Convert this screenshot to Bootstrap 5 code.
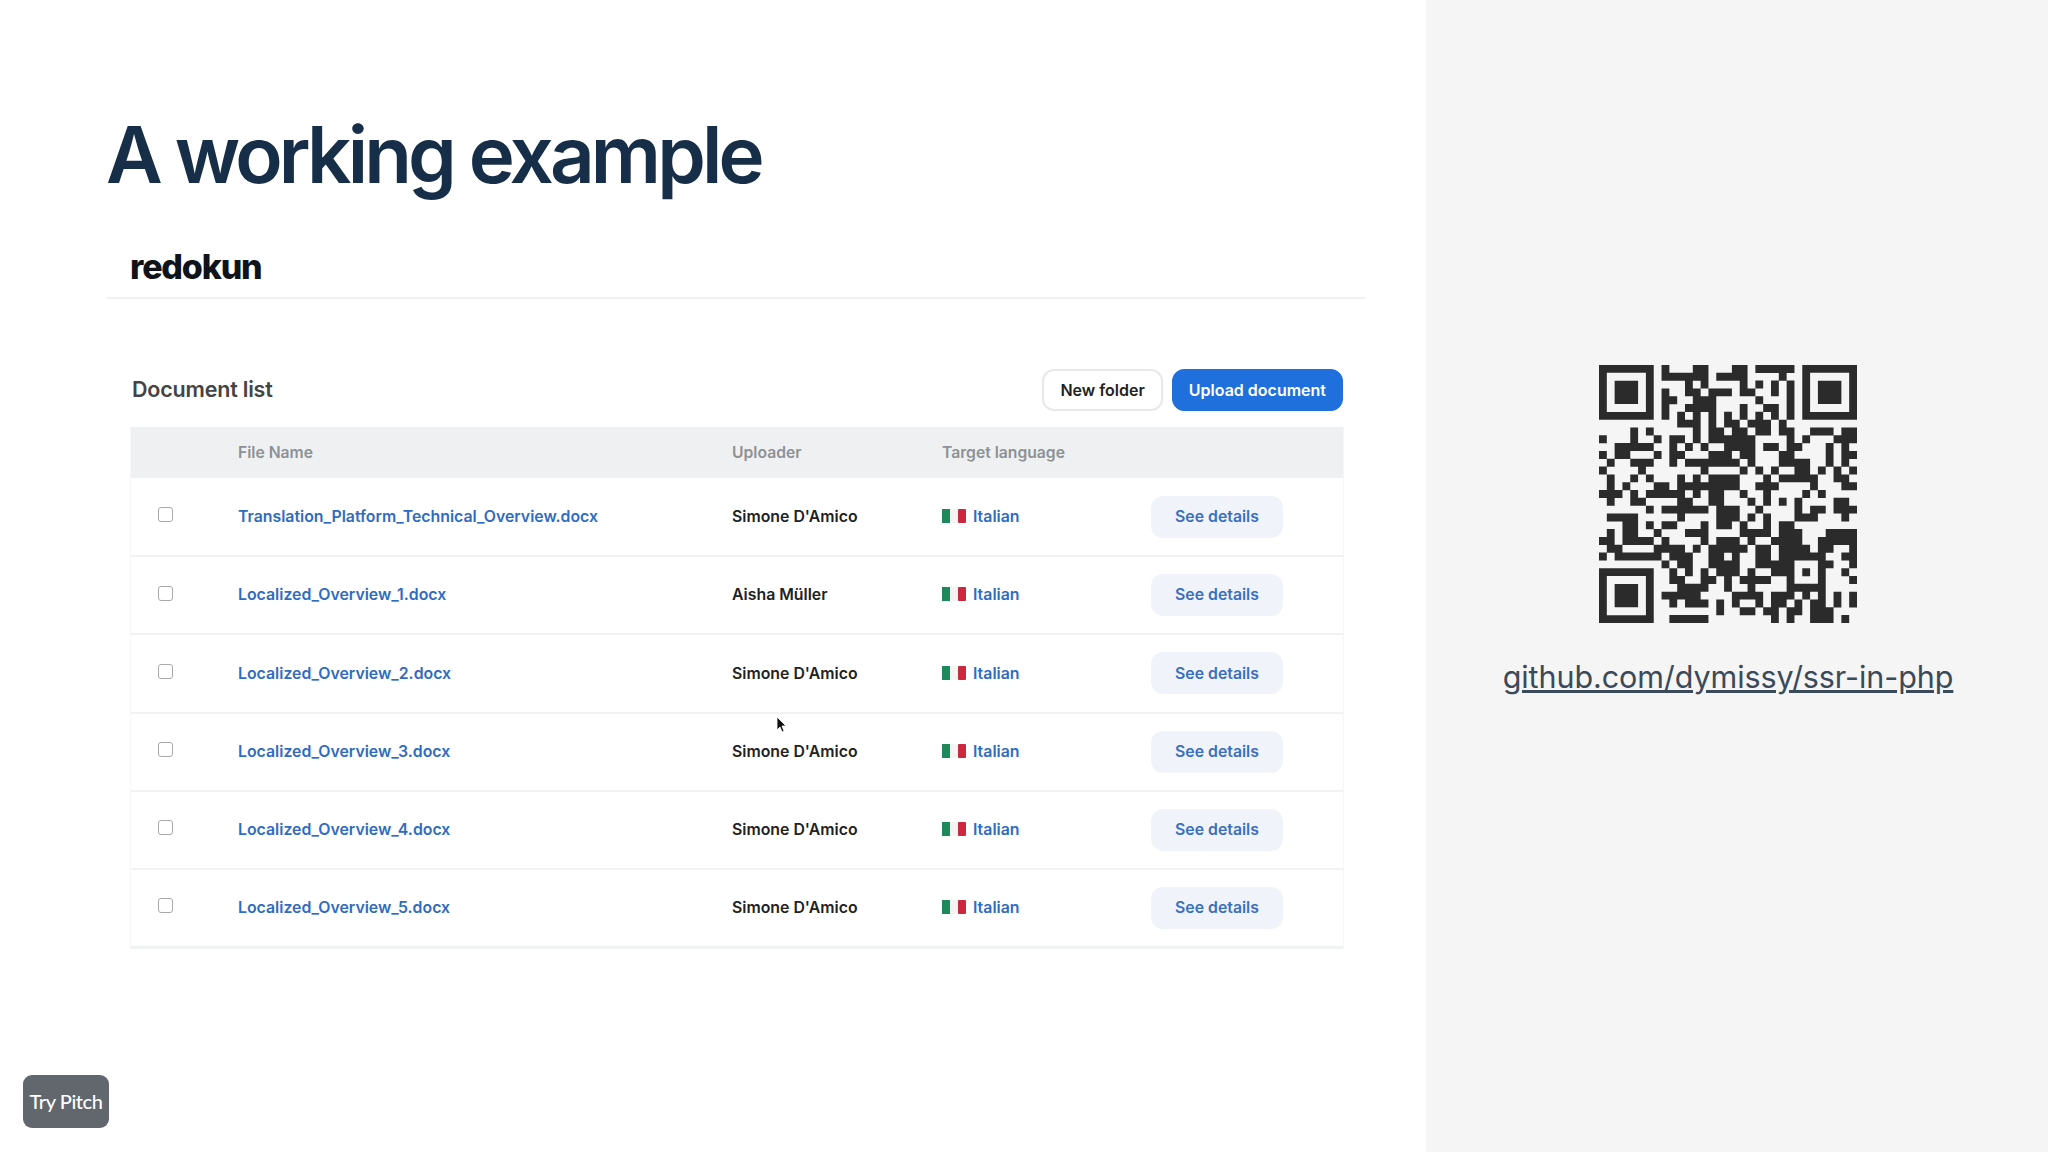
<!DOCTYPE html>
<html lang="en">
<head>
<meta charset="utf-8">
<title>A working example</title>
<link href="https://cdn.jsdelivr.net/npm/bootstrap@5.3.0/dist/css/bootstrap.min.css" rel="stylesheet">
<style>
html,body{height:100%;}
body{font-family:"Inter","Liberation Sans",sans-serif;background:#fff;overflow:hidden;}
.slide{height:1152px;position:relative;}
.slide-main{width:1426px;padding:112px 61px 0 107px;}
.slide-side{width:622px;background:#f5f5f5;padding:365px 18px 0 0;}
.slide-title{font-size:78px;line-height:86px;font-weight:600;letter-spacing:-3.85px;color:#172e48;margin:0 0 41px -1px;}
.app-head{padding:0 0 4px 23px;height:60px;border-bottom:2px solid #eef0f1;display:flex;align-items:center;}
.app-logo{font-size:34px;font-weight:800;letter-spacing:-1.2px;color:#10131a;}
.app-body{padding:70px 22px 0 24px;}
.doc-title{font-size:21.5px;font-weight:600;letter-spacing:-.2px;color:#444;margin:0;padding-left:1px;}
.doc-bar{height:42px;margin-bottom:16px;}
.act-row{column-gap:9px;}
.act{font-size:16px;font-weight:600;height:42px;border-radius:12px;padding:0 16px;display:inline-flex;align-items:center;}
.act-light{background:#fff;border:2px solid #e8e8e8;color:#222;}
.act-blue{background:#1f6fdc;border:1px solid #1f6fdc;color:#fff;}
.doc-table{width:1212px;table-layout:fixed;margin:0;box-shadow:1px 0 0 #f6f6f6,-1px 0 0 #f6f6f6;}
.doc-table th{background:#eff0f2;color:#8d9095;font-size:15.7px;font-weight:600;height:51px;padding:0;vertical-align:middle;border:0;}
.doc-table td{height:78.2px;padding:0;vertical-align:middle;font-size:15.85px;font-weight:600;color:#222;border-bottom:2px solid #f1f2f3;}
.doc-table tr:last-child td{border-bottom-width:3px;}
.cell-box{padding-left:27px!important;}
.cell-box .form-check-input{width:15px;height:15px;margin:0 0 4px;border:1.5px solid #a8a8a8;border-radius:3px;display:block;}
.doc-link{color:#2f6cc0;text-decoration:none;}
.lang-flag{width:24px;height:14px;margin-right:7px;vertical-align:-1px;}
.see{background:#f0f4fa;color:#3a6fc0;font-size:15.8px;font-weight:600;border:0;border-radius:12px;width:132px;height:42px;padding:0;}
.qr-code{width:258px;height:258px;display:block;}
.repo-link{font-size:30.5px;color:#3a4a5a;letter-spacing:-.08px;line-height:1;margin-top:39px;}
.try-pitch{position:absolute;left:23px;top:1075px;width:86px;height:53px;border-radius:9px;background:#62666d;color:#fff;font:500 20px/53px "Lato","Liberation Sans",sans-serif;letter-spacing:-.45px;text-align:center;}
.mouse-arrow{position:absolute;left:776px;top:716px;width:11px;height:18px;}
</style>
</head>
<body>
<div class="slide d-flex">
  <main class="slide-main">
    <h1 class="slide-title">A working example</h1>
    <div class="app-head"><span class="app-logo">redokun</span></div>
    <div class="app-body">
      <div class="doc-bar d-flex align-items-center justify-content-between">
        <h2 class="doc-title">Document list</h2>
        <div class="d-flex act-row">
          <button type="button" class="btn act act-light">New folder</button>
          <button type="button" class="btn act act-blue">Upload document</button>
        </div>
      </div>
      <table class="table doc-table">
        <colgroup><col style="width:107px"><col style="width:494px"><col style="width:210px"><col style="width:209px"><col style="width:192px"></colgroup>
        <thead><tr><th></th><th>File Name</th><th>Uploader</th><th>Target language</th><th></th></tr></thead>
        <tbody>
          <tr><td class="cell-box"><input class="form-check-input" type="checkbox" aria-label="Select"></td><td><a class="doc-link" href="#">Translation_Platform_Technical_Overview.docx</a></td><td>Simone D'Amico</td><td><svg class="lang-flag" viewBox="0 0 24 14"><rect width="8" height="14" fill="#1e8a5c"/><rect x="8" width="8" height="14" fill="#f4f4f4"/><rect x="16" width="8" height="14" rx="1" fill="#c9283f"/></svg><a class="doc-link" href="#">Italian</a></td><td><button type="button" class="btn see">See details</button></td></tr>
          <tr><td class="cell-box"><input class="form-check-input" type="checkbox" aria-label="Select"></td><td><a class="doc-link" href="#">Localized_Overview_1.docx</a></td><td>Aisha Müller</td><td><svg class="lang-flag" viewBox="0 0 24 14"><rect width="8" height="14" fill="#1e8a5c"/><rect x="8" width="8" height="14" fill="#f4f4f4"/><rect x="16" width="8" height="14" rx="1" fill="#c9283f"/></svg><a class="doc-link" href="#">Italian</a></td><td><button type="button" class="btn see">See details</button></td></tr>
          <tr><td class="cell-box"><input class="form-check-input" type="checkbox" aria-label="Select"></td><td><a class="doc-link" href="#">Localized_Overview_2.docx</a></td><td>Simone D'Amico</td><td><svg class="lang-flag" viewBox="0 0 24 14"><rect width="8" height="14" fill="#1e8a5c"/><rect x="8" width="8" height="14" fill="#f4f4f4"/><rect x="16" width="8" height="14" rx="1" fill="#c9283f"/></svg><a class="doc-link" href="#">Italian</a></td><td><button type="button" class="btn see">See details</button></td></tr>
          <tr><td class="cell-box"><input class="form-check-input" type="checkbox" aria-label="Select"></td><td><a class="doc-link" href="#">Localized_Overview_3.docx</a></td><td>Simone D'Amico</td><td><svg class="lang-flag" viewBox="0 0 24 14"><rect width="8" height="14" fill="#1e8a5c"/><rect x="8" width="8" height="14" fill="#f4f4f4"/><rect x="16" width="8" height="14" rx="1" fill="#c9283f"/></svg><a class="doc-link" href="#">Italian</a></td><td><button type="button" class="btn see">See details</button></td></tr>
          <tr><td class="cell-box"><input class="form-check-input" type="checkbox" aria-label="Select"></td><td><a class="doc-link" href="#">Localized_Overview_4.docx</a></td><td>Simone D'Amico</td><td><svg class="lang-flag" viewBox="0 0 24 14"><rect width="8" height="14" fill="#1e8a5c"/><rect x="8" width="8" height="14" fill="#f4f4f4"/><rect x="16" width="8" height="14" rx="1" fill="#c9283f"/></svg><a class="doc-link" href="#">Italian</a></td><td><button type="button" class="btn see">See details</button></td></tr>
          <tr><td class="cell-box"><input class="form-check-input" type="checkbox" aria-label="Select"></td><td><a class="doc-link" href="#">Localized_Overview_5.docx</a></td><td>Simone D'Amico</td><td><svg class="lang-flag" viewBox="0 0 24 14"><rect width="8" height="14" fill="#1e8a5c"/><rect x="8" width="8" height="14" fill="#f4f4f4"/><rect x="16" width="8" height="14" rx="1" fill="#c9283f"/></svg><a class="doc-link" href="#">Italian</a></td><td><button type="button" class="btn see">See details</button></td></tr>
        </tbody>
      </table>
    </div>
  </main>
  <aside class="slide-side d-flex flex-column align-items-center">
    <svg class="qr-code" viewBox="0 0 33 33" aria-label="QR code">
      <path fill="#2b2b2b" fill-rule="evenodd" d="M0 0h7v7H0zM1 1v5h5V1zM2 2h3v3H2zM26 0h7v7h-7zM27 1v5h5V1zM28 2h3v3h-3zM0 26h7v7H0zM1 27v5h5v-5zM2 28h3v3H2z"/>
      <path stroke="#2b2b2b" stroke-width="1.02" fill="none" d="M8 .5h1M12 .5h2M17 .5h2M20 .5h5
M8 1.5h6M15 1.5h4M23 1.5h1
M11 2.5h1M13 2.5h1M18 2.5h1M20 2.5h1M22 2.5h1M24 2.5h1
M8 3.5h1M11 3.5h2M14 3.5h3M18 3.5h2M22 3.5h1M24 3.5h1
M8 4.5h2M12 4.5h3M20 4.5h1M24 4.5h1
M8 5.5h1M11 5.5h4M18 5.5h1M21 5.5h2M24 5.5h1
M8 6.5h1M10 6.5h1M12 6.5h1M14 6.5h1M16 6.5h1M18 6.5h1M20 6.5h1M22 6.5h1M24 6.5h1
M10 7.5h3M14 7.5h1M16 7.5h2M19 7.5h3M23 7.5h1
M4 8.5h1M6 8.5h1M12 8.5h1M14 8.5h2M17 8.5h2M20 8.5h2M23 8.5h2M27 8.5h3M31 8.5h2
M0 9.5h1M4 9.5h1M7 9.5h1M9 9.5h2M12 9.5h1M14 9.5h6M24 9.5h1M26 9.5h1M30 9.5h3
M2 10.5h5M9 10.5h1M11 10.5h1M13 10.5h1M16 10.5h4M21 10.5h2M24 10.5h2M29 10.5h1M31 10.5h1
M0 11.5h1M2 11.5h2M7 11.5h1M9 11.5h2M14 11.5h3M18 11.5h2M23 11.5h2M29 11.5h1M31 11.5h2
M1 12.5h1M4 12.5h3M9 12.5h1M11 12.5h7M19 12.5h1M23 12.5h4M29 12.5h1M31 12.5h1
M0 13.5h1M5 13.5h1M13 13.5h1M18 13.5h1M20 13.5h1M22 13.5h1M25 13.5h2M28 13.5h1M30 13.5h1M32 13.5h1
M1 14.5h1M4 14.5h1M6 14.5h1M10 14.5h1M12 14.5h1M14 14.5h4M21 14.5h1M23 14.5h5M30 14.5h2
M1 15.5h1M3 15.5h1M7 15.5h2M10 15.5h8M20 15.5h3M27 15.5h1M31 15.5h2
M0 16.5h3M4 16.5h1M6 16.5h5M12 16.5h1M14 16.5h2M18 16.5h1M21 16.5h1M26 16.5h1M28 16.5h1
M1 17.5h1M4 17.5h2M10 17.5h2M14 17.5h2M19 17.5h1M21 17.5h1M23 17.5h1M25 17.5h1M30 17.5h2
M6 18.5h1M8 18.5h6M15 18.5h3M20 18.5h1M25 18.5h1M27 18.5h2M30 18.5h3
M1 19.5h4M10 19.5h1M15 19.5h3M19 19.5h1M21 19.5h1M25 19.5h3M31 19.5h1
M3 20.5h2M6 20.5h1M8 20.5h2M13 20.5h1M15 20.5h2M18 20.5h1M21 20.5h1M23 20.5h2
M1 21.5h1M3 21.5h2M7 21.5h1M11 21.5h3M18 21.5h4M23 21.5h3M29 21.5h4
M0 22.5h2M3 22.5h4M8 22.5h1M13 22.5h1M15 22.5h3M19 22.5h1M22 22.5h4M28 22.5h5
M1 23.5h2M7 23.5h4M12 23.5h1M14 23.5h5M20 23.5h2M23 23.5h4M28 23.5h2M32 23.5h1
M0 24.5h1M2 24.5h6M9 24.5h3M14 24.5h2M17 24.5h1M20 24.5h2M23 24.5h6M31 24.5h2
M8 25.5h1M10 25.5h2M14 25.5h4M20 25.5h5M28 25.5h2M32 25.5h1
M9 26.5h1M11 26.5h1M13 26.5h1M15 26.5h3M19 26.5h1M22 26.5h3M26 26.5h1M28 26.5h1M31 26.5h1
M9 27.5h2M13 27.5h2M16 27.5h1M18 27.5h4M24 27.5h1M28 27.5h1M32 27.5h1
M10 28.5h4M16 28.5h1M19 28.5h1M24 28.5h5
M8 29.5h5M17 29.5h4M22 29.5h3M26 29.5h1M28 29.5h1M30 29.5h1M32 29.5h1
M9 30.5h1M11 30.5h3M15 30.5h1M17 30.5h1M20 30.5h1M22 30.5h2M25 30.5h1M27 30.5h2M30 30.5h1M32 30.5h1
M15 31.5h1M18 31.5h2M21 31.5h2M24 31.5h2M27 31.5h3
M9 32.5h5M22 32.5h1M24 32.5h1M27 32.5h3M31 32.5h1"/>
    </svg>
    <a class="repo-link" href="#">github.com/dymissy/ssr-in-php</a>
  </aside>
  <div class="try-pitch">Try Pitch</div>
  <svg class="mouse-arrow" viewBox="0 0 11 18"><path d="M1 1v13l3-3 2 5 2-1-2-5h4z" fill="#111" stroke="#fff" stroke-width=".8"/></svg>
</div>
<script src="https://cdn.jsdelivr.net/npm/bootstrap@5.3.0/dist/js/bootstrap.bundle.min.js"></script>
</body>
</html>
